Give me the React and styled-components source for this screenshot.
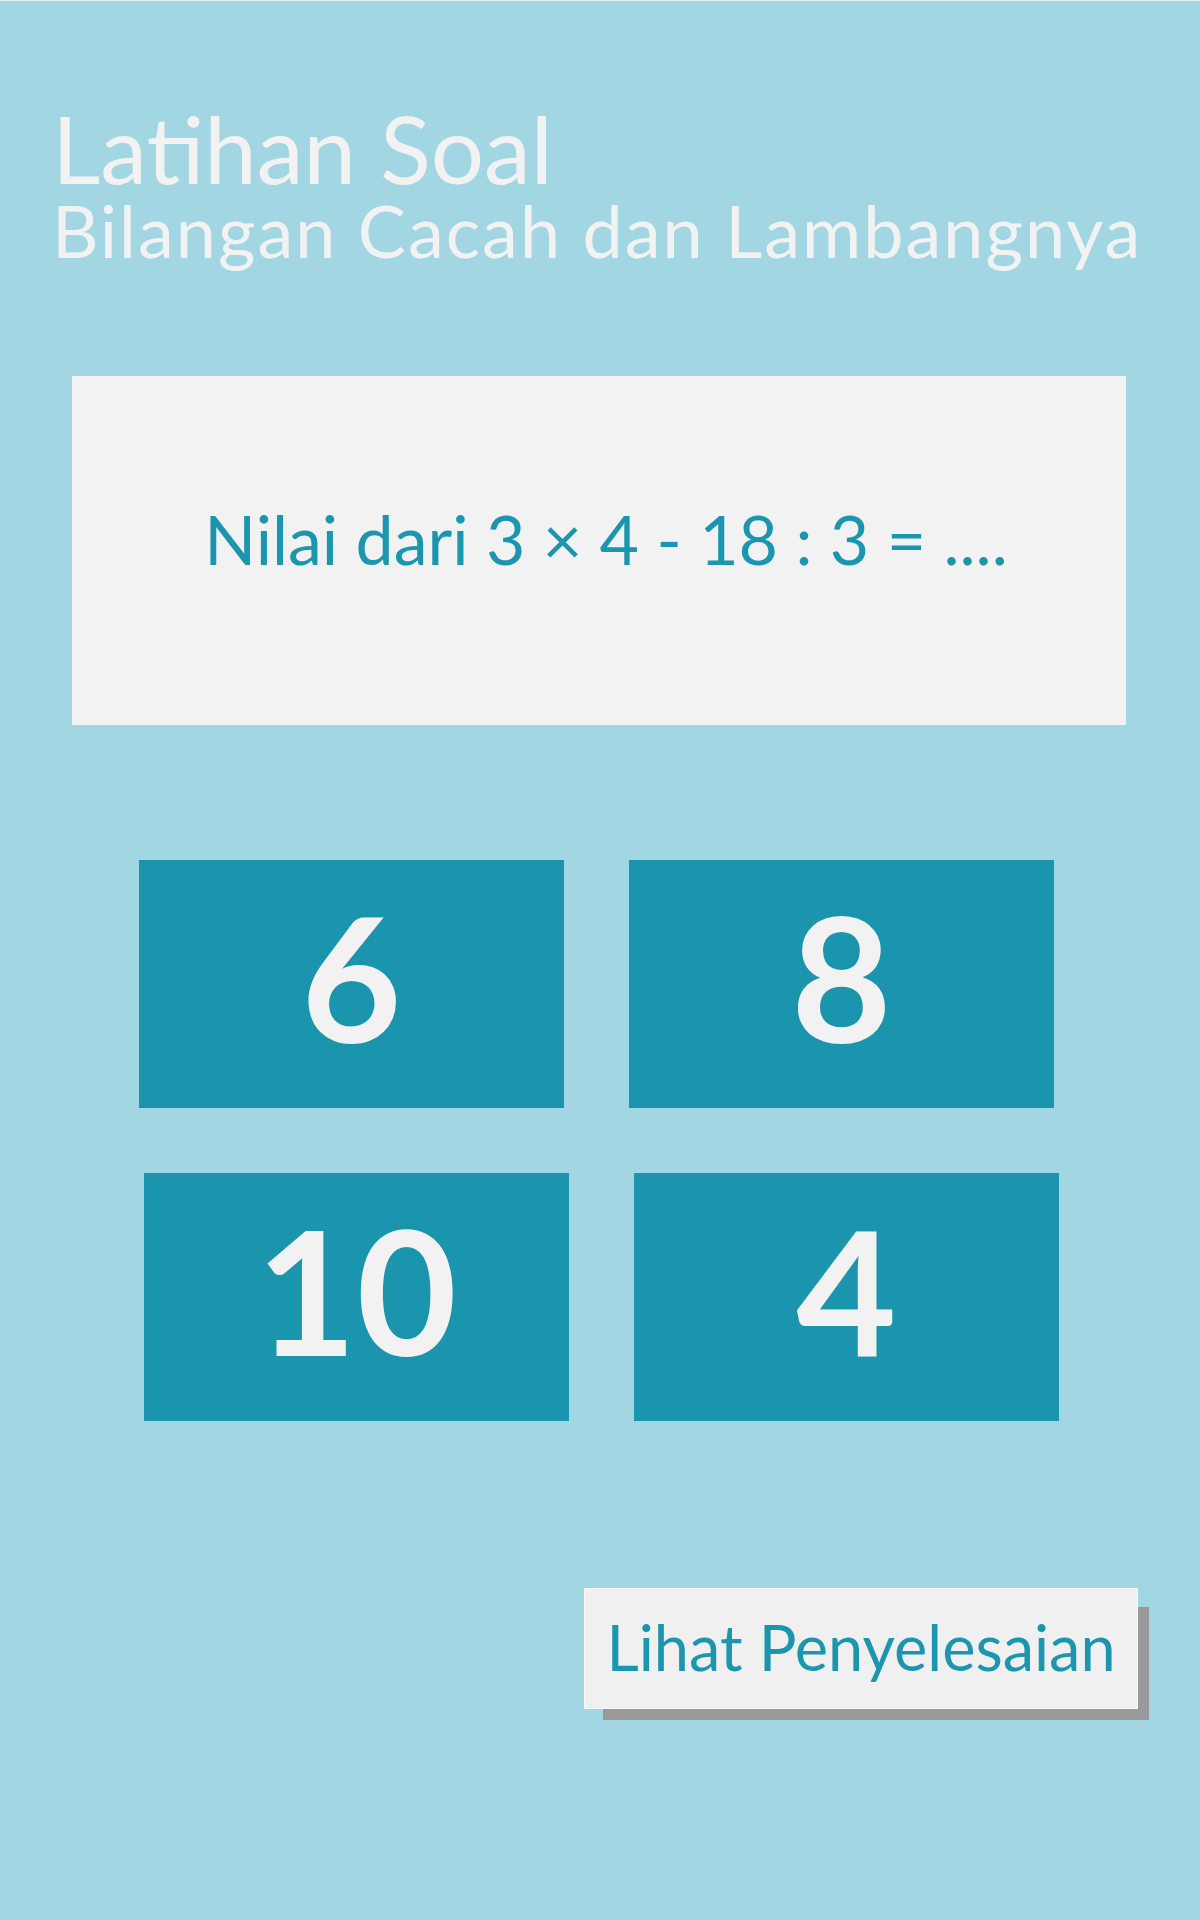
import React from "react";
import styled, { createGlobalStyle } from "styled-components";

const GlobalStyle = createGlobalStyle`
  html, body {
    margin: 0;
    padding: 0;
    background-color: #a3d6e3;
  }
`;

const Page = styled.div`
  min-height: 1920px;
  box-sizing: border-box;
  background-color: #a3d6e3;
  border-top: 1px solid #e4f3f7;
  font-family: Lato, "Noto Sans", sans-serif;
  display: flex;
  flex-direction: column;
`;

const Header = styled.header`
  padding: 100px 0 0 52px;
  color: #f2f2f2;
`;

const Title = styled.h1`
  margin: 0;
  font-size: 94px;
  line-height: 94px;
  font-weight: 400;
`;

const Subtitle = styled.h2`
  margin: 0;
  font-size: 72px;
  line-height: 70px;
  letter-spacing: 2px;
  font-weight: 400;
`;

const QuestionCard = styled.section`
  margin: 111px 0 0 72px;
  width: 1054px;
  height: 349px;
  background-color: #f2f2f2;
  display: flex;
  align-items: center;
  justify-content: center;
`;

const Question = styled.p`
  margin: 0 0 24px 14px;
  color: #1b96ae;
  font-size: 68px;
  line-height: 68px;
  font-weight: 400;
`;

const Answers = styled.div`
  margin-top: 135px;
  display: flex;
  flex-direction: column;
  gap: 65px;
`;

const AnswerRow = styled.div`
  display: flex;
  gap: 65px;
  padding-left: ${(p) => p.$offset}px;
`;

const AnswerBox = styled.button`
  width: 425px;
  height: 248px;
  border: none;
  padding: 0 0 16px 0;
  background-color: #1b95ae;
  color: #f2f2f2;
  font-family: Lato, "Noto Sans", sans-serif;
  font-size: 173px;
  line-height: 1;
  font-weight: 700;
  display: flex;
  align-items: center;
  justify-content: center;
  cursor: pointer;
`;

const Footer = styled.div`
  margin-top: 167px;
  display: flex;
  justify-content: flex-end;
  padding-right: 62px;
`;

const SolutionButton = styled.button`
  width: 554px;
  height: 121px;
  box-sizing: border-box;
  border: 1px solid #f7fbfc;
  background-color: #f0f0f0;
  box-shadow: 15px 15px 0 -4px #999999;
  color: #1b96ae;
  font-family: Lato, "Noto Sans", sans-serif;
  font-size: 63px;
  font-weight: 400;
  line-height: 1;
  padding: 0 0 4px 0;
  cursor: pointer;
`;

const answers = [
  { offset: 139, items: ["6", "8"] },
  { offset: 144, items: ["10", "4"] },
];

export default function App() {
  return (
    <Page>
      <GlobalStyle />
      <Header>
        <Title>Latihan Soal</Title>
        <Subtitle>Bilangan Cacah dan Lambangnya</Subtitle>
      </Header>

      <QuestionCard>
        <Question>Nilai dari 3 × 4 - 18 : 3 = ....</Question>
      </QuestionCard>

      <Answers>
        {answers.map((row) => (
          <AnswerRow key={row.offset} $offset={row.offset}>
            {row.items.map((n) => (
              <AnswerBox key={n}>{n}</AnswerBox>
            ))}
          </AnswerRow>
        ))}
      </Answers>

      <Footer>
        <SolutionButton>Lihat Penyelesaian</SolutionButton>
      </Footer>
    </Page>
  );
}
